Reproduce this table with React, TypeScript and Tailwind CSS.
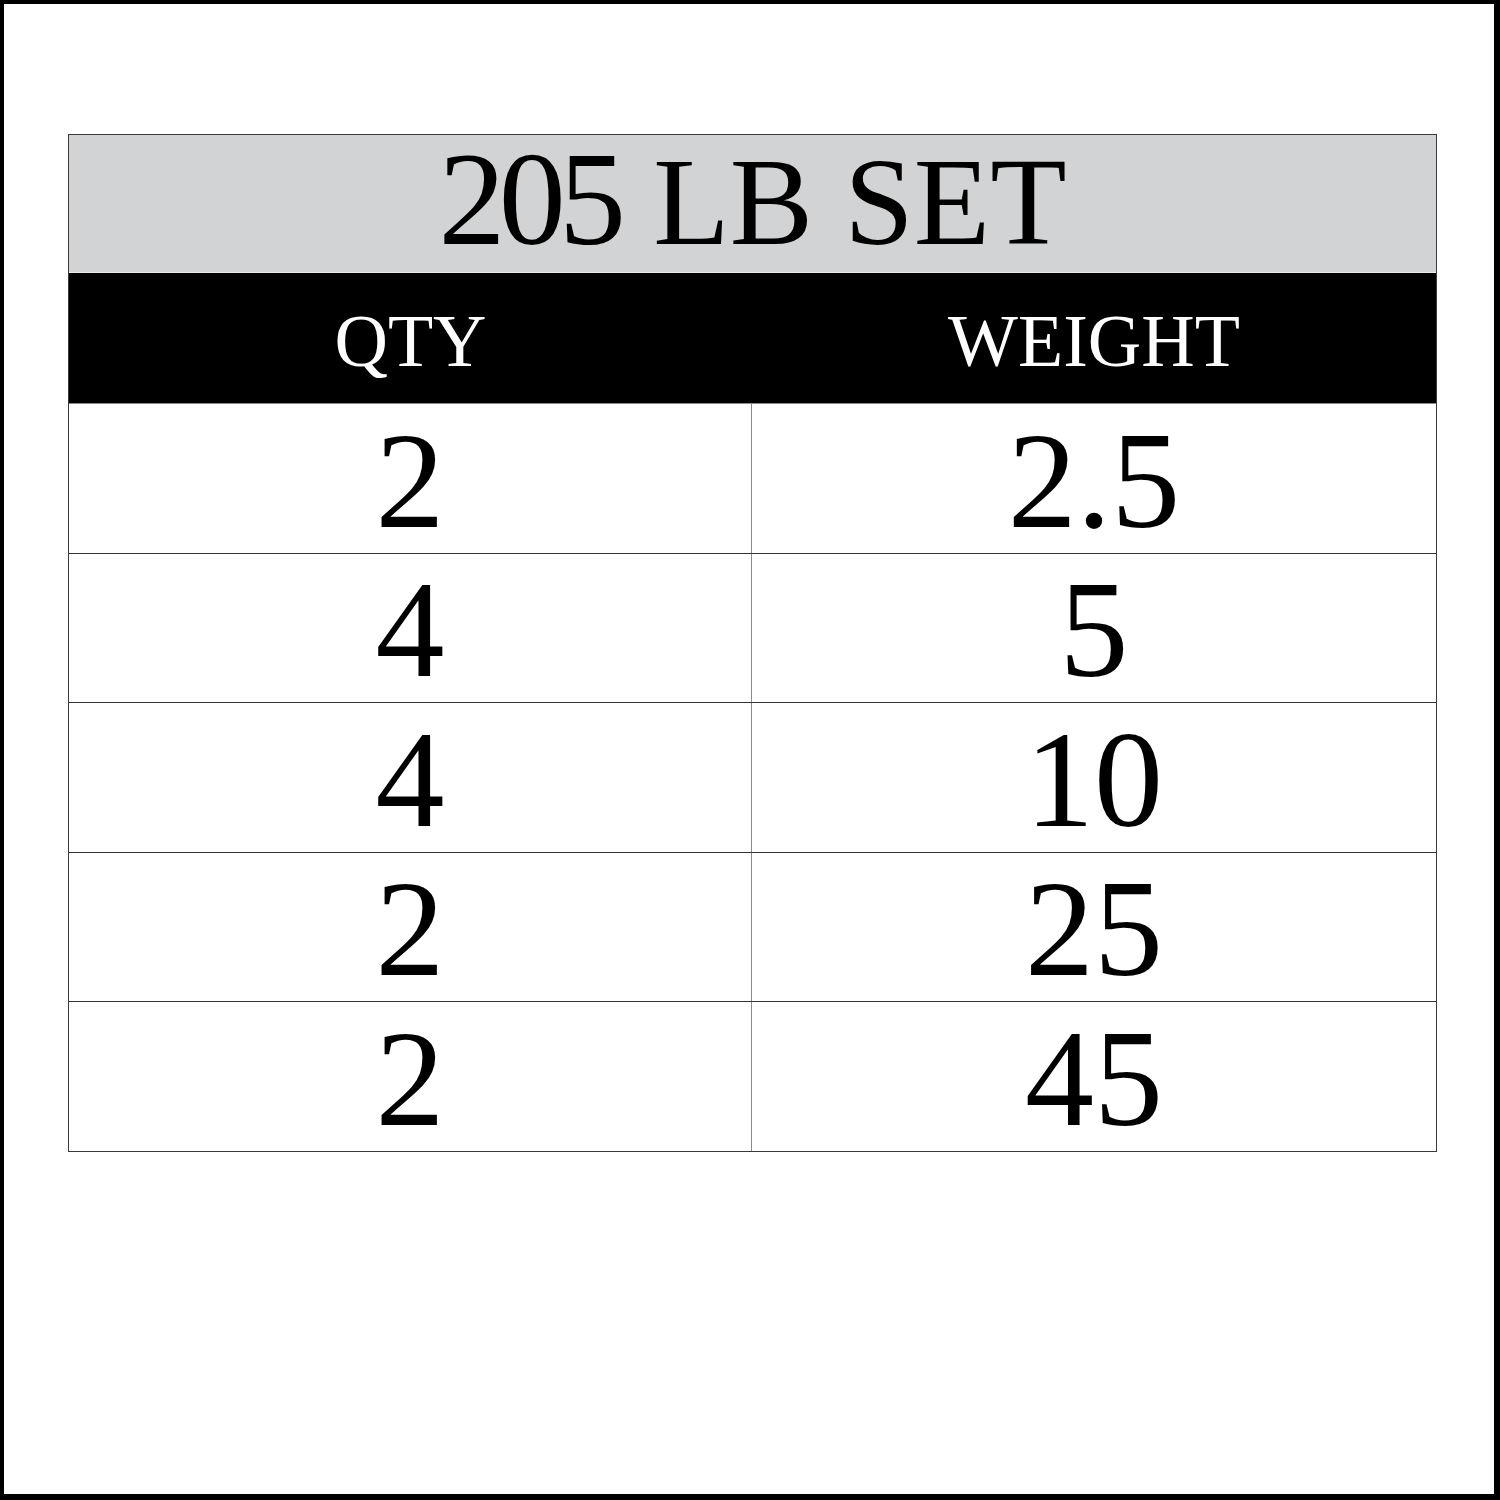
import React from 'react';

const rows = [
  { qty: '2', weight: '2.5', h: 'h-[150px]' },
  { qty: '4', weight: '5', h: 'h-[149px]' },
  { qty: '4', weight: '10', h: 'h-[150px]' },
  { qty: '2', weight: '25', h: 'h-[149px]' },
  { qty: '2', weight: '45', h: 'h-[149px]' },
];

export default function App() {
  return (
    <div
      className="w-[1500px] h-[1500px] bg-white border-t-4 border-l-4 border-r-[6px] border-b-[6px] border-black text-black"
      style={{ fontFamily: '"Liberation Serif", "Times New Roman", serif' }}
    >
      <div className="ml-[64px] mt-[130px] w-[1369px] border border-[#3a3a3a]">
        {/* Title */}
        <div className="h-[138px] bg-[#d1d3d4] border-b border-[#ececec] flex items-center justify-center pb-[10px]">
          <div className="flex items-baseline leading-none">
            <span className="text-[134px] tracking-[-0.05em]">205</span>
            <span className="text-[125px] ml-[34px]">LB SET</span>
          </div>
        </div>

        {/* Column header */}
        <div className="h-[131px] bg-black border-b border-[#8a8a8a] grid grid-cols-[683px_1fr] text-white">
          <div className="flex items-center justify-center pt-[6px] text-[74px] leading-none">QTY</div>
          <div className="flex items-center justify-center pt-[6px] text-[74px] leading-none">WEIGHT</div>
        </div>

        {/* Rows */}
        {rows.map((row, idx) => (
          <div
            key={idx}
            className={`${row.h} grid grid-cols-[683px_1fr] ${idx < rows.length - 1 ? 'border-b border-[#333333]' : ''}`}
          >
            <div className="flex items-center justify-center border-r border-[#8a8a8a] text-[138px] leading-none pt-[4px]">
              {row.qty}
            </div>
            <div className="flex items-center justify-center text-[138px] leading-none pt-[4px]">
              {row.weight}
            </div>
          </div>
        ))}
      </div>
    </div>
  );
}
